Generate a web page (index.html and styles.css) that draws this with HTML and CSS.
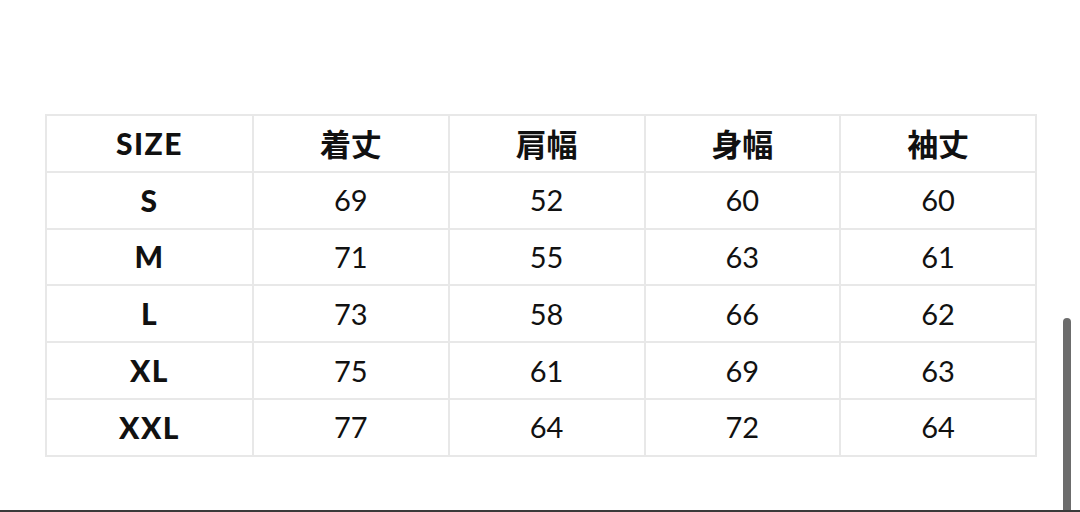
FILE: index.html
```html
<!DOCTYPE html>
<html lang="ja">
<head>
<meta charset="utf-8">
<link rel="stylesheet" href="styles.css">
</head>
<body>
<main class="page">
  <table class="size-table">
    <colgroup>
      <col class="c-size"><col class="c"><col class="c"><col class="c"><col class="c">
    </colgroup>
    <thead>
      <tr><th class="lat">SIZE</th><th>着丈</th><th>肩幅</th><th>身幅</th><th>袖丈</th></tr>
    </thead>
    <tbody>
      <tr><th class="lat">S</th><td>69</td><td>52</td><td>60</td><td>60</td></tr>
      <tr><th class="lat">M</th><td>71</td><td>55</td><td>63</td><td>61</td></tr>
      <tr><th class="lat">L</th><td>73</td><td>58</td><td>66</td><td>62</td></tr>
      <tr><th class="lat">XL</th><td>75</td><td>61</td><td>69</td><td>63</td></tr>
      <tr><th class="lat">XXL</th><td>77</td><td>64</td><td>72</td><td>64</td></tr>
    </tbody>
  </table>
</main>
<div class="scrollbar"></div>
<div class="bottom-line"></div>
</body>
</html>
```
FILE: styles.css
```css
html, body {
  margin: 0;
  padding: 0;
  background: #ffffff;
  width: 1080px;
  height: 512px;
  overflow: hidden;
}
.page {
  padding: 114px 0 0 45px;
}
.size-table {
  border-collapse: collapse;
  width: 990px;
  table-layout: fixed;
  color: #111;
}
.c-size { width: 207px; }
.c { width: 195.75px; }
.size-table th,
.size-table td {
  border: 2px solid #e8e8e8;
  height: 56.8px;
  padding: 0 0 1px 0;
  box-sizing: border-box;
  text-align: center;
  vertical-align: middle;
}
.size-table th {
  font-family: "Noto Sans CJK JP", sans-serif;
  font-weight: 700;
  font-size: 31px;
  line-height: 1;
}
.size-table th.lat {
  font-family: "Lato", "Noto Sans", sans-serif;
  font-weight: 900;
  font-size: 30px;
  letter-spacing: 1.5px;
}
.size-table td {
  font-family: "Lato", "Noto Sans", sans-serif;
  font-weight: 400;
  font-size: 29px;
  line-height: 1;
}
.scrollbar {
  position: absolute;
  left: 1063px;
  top: 318px;
  width: 8px;
  height: 194px;
  border-radius: 4px 4px 0 0;
  background: #6c6c6c;
}
.bottom-line {
  position: absolute;
  left: 0;
  top: 510px;
  width: 1080px;
  height: 2px;
  background: #3a3a3a;
}
```
